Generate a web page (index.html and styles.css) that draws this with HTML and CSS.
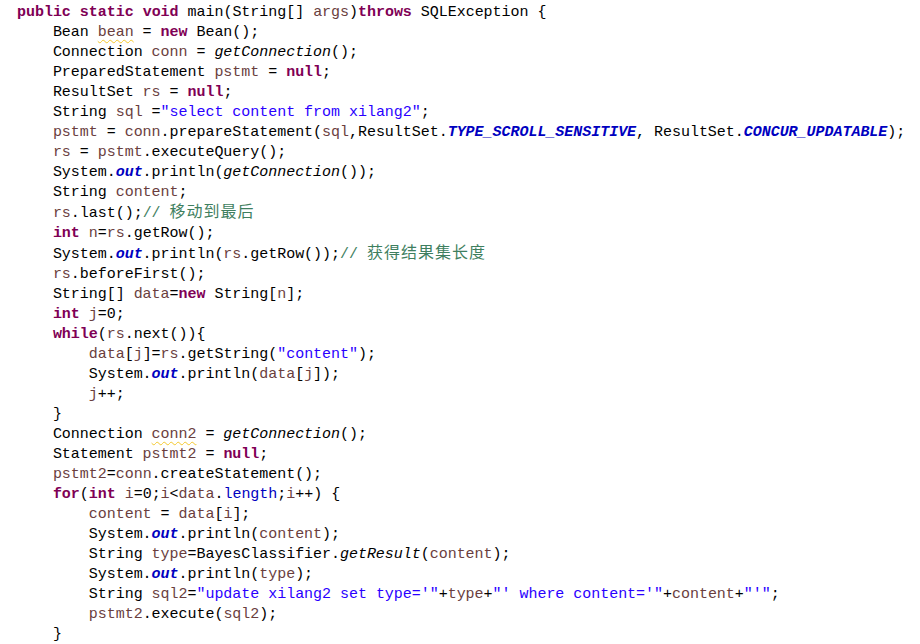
FILE: index.html
```html
<!DOCTYPE html>
<html>
<head>
<meta charset="utf-8">
<link rel="stylesheet" href="styles.css">
</head>
<body>
<pre class="code"><span class="k">public</span> <span class="k">static</span> <span class="k">void</span> main(String[] <span class="v">args</span>)<span class="k">throws</span> SQLException {
    Bean <span class="v warn">bean</span> = <span class="k">new</span> Bean();
    Connection <span class="v">conn</span> = <span class="i">getConnection</span>();
    PreparedStatement <span class="v">pstmt</span> = <span class="k">null</span>;
    ResultSet <span class="v">rs</span> = <span class="k">null</span>;
    String <span class="v">sql</span> =<span class="s">"select content from xilang2"</span>;
    <span class="v">pstmt</span> = <span class="v">conn</span>.prepareStatement(<span class="v">sql</span>,ResultSet.<span class="sf">TYPE_SCROLL_SENSITIVE</span>, ResultSet.<span class="sf">CONCUR_UPDATABLE</span>);
    <span class="v">rs</span> = <span class="v">pstmt</span>.executeQuery();
    System.<span class="sf">out</span>.println(<span class="i">getConnection</span>());
    String <span class="v">content</span>;
    <span class="v">rs</span>.last();<span class="c">// <span class="cjk">移动到最后</span></span>
    <span class="k">int</span> <span class="v">n</span>=<span class="v">rs</span>.getRow();
    System.<span class="sf">out</span>.println(<span class="v">rs</span>.getRow());<span class="c">// <span class="cjk">获得结果集长度</span></span>
    <span class="v">rs</span>.beforeFirst();
    String[] <span class="v">data</span>=<span class="k">new</span> String[<span class="v">n</span>];
    <span class="k">int</span> <span class="v">j</span>=0;
    <span class="k">while</span>(<span class="v">rs</span>.next()){
        <span class="v">data</span>[<span class="v">j</span>]=<span class="v">rs</span>.getString(<span class="s">"content"</span>);
        System.<span class="sf">out</span>.println(<span class="v">data</span>[<span class="v">j</span>]);
        <span class="v">j</span>++;
    }
    Connection <span class="v warn">conn2</span> = <span class="i">getConnection</span>();
    Statement <span class="v">pstmt2</span> = <span class="k">null</span>;
    <span class="v">pstmt2</span>=<span class="v">conn</span>.createStatement();
    <span class="k">for</span>(<span class="k">int</span> <span class="v">i</span>=0;<span class="v">i</span>&lt;<span class="v">data</span>.<span class="f">length</span>;<span class="v">i</span>++) {
        <span class="v">content</span> = <span class="v">data</span>[<span class="v">i</span>];
        System.<span class="sf">out</span>.println(<span class="v">content</span>);
        String <span class="v">type</span>=BayesClassifier.<span class="i">getResult</span>(<span class="v">content</span>);
        System.<span class="sf">out</span>.println(<span class="v">type</span>);
        String <span class="v">sql2</span>=<span class="s">"update xilang2 set type='"</span>+<span class="v">type</span>+<span class="s">"' where content='"</span>+<span class="v">content</span>+<span class="s">"'"</span>;
        <span class="v">pstmt2</span>.execute(<span class="v">sql2</span>);
    }</pre>
</body>
</html>
```
FILE: styles.css
```css
html, body {
  margin: 0;
  padding: 0;
  background: #ffffff;
}
.code {
  margin: 0;
  padding: 3px 0 0 17px;
  font-family: "Liberation Mono", "DejaVu Sans Mono", monospace;
  font-size: 15px;
  letter-spacing: -0.03px;
  line-height: 20px;
  color: #000000;
  white-space: pre;
}
.k { color: #7f0055; font-weight: bold; }
.v { color: #6a3e3e; }
.s { color: #2a00ff; }
.f { color: #0000c0; }
.sf { color: #0000c0; font-weight: bold; font-style: italic; }
.i { font-style: italic; }
.c { color: #3f7f5f; }
.cjk {
  font-family: "Noto Sans CJK SC", sans-serif;
  font-size: 16px;
  line-height: 14px;
  letter-spacing: 1px;
}
.warn {
  text-decoration: underline wavy #f4c82d;
  text-decoration-thickness: 1px;
  text-underline-offset: 3px;
}
```
